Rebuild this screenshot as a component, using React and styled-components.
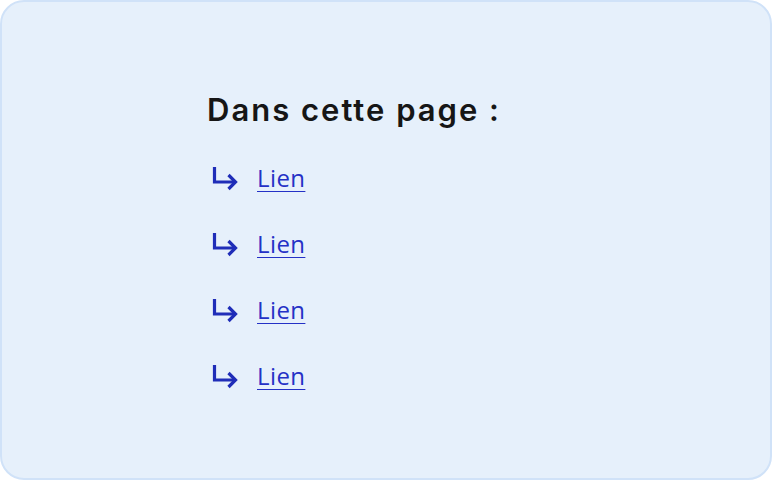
import React from "react";
import styled, { createGlobalStyle } from "styled-components";

const Global = createGlobalStyle`
  html, body { margin: 0; padding: 0; background: #ffffff; }
  * { box-sizing: border-box; }
`;

const Card = styled.nav`
  width: 772px;
  height: 480px;
  background: #e6f0fb;
  border: 2px solid #d0e2f8;
  border-radius: 24px;
  padding: 89px 0 0 205px;
  display: flex;
  flex-direction: column;
`;

const Title = styled.h2`
  margin: 0;
  font-family: "Inter", "Noto Sans", sans-serif;
  font-weight: 600;
  font-size: 31px;
  line-height: 38px;
  letter-spacing: 2px;
  color: #161616;
`;

const List = styled.ul`
  list-style: none;
  margin: 29px 0 0;
  padding: 0;
  display: flex;
  flex-direction: column;
  gap: 26px;
`;

const Item = styled.li`
  display: flex;
  align-items: center;
  gap: 19px;
  height: 40px;
  padding-left: 4px;
`;

const Link = styled.a`
  font-family: "Open Sans", "Noto Sans", sans-serif;
  font-size: 24px;
  line-height: 32px;
  letter-spacing: 0.4px;
  color: #2431c6;
  text-decoration: underline;
  text-decoration-thickness: 1px;
  text-underline-offset: 4px;
`;

const Arrow = () => (
  <svg width="27" height="26" viewBox="0 0 27 26" fill="none">
    <path d="M3.5 2 V17 H24" stroke="#1f2db8" strokeWidth="3.2" />
    <path d="M17.5 10 L24.5 17 L17.5 24" stroke="#1f2db8" strokeWidth="3.2" />
  </svg>
);

export default function App() {
  const links = ["Lien", "Lien", "Lien", "Lien"];
  return (
    <>
      <Global />
      <Card>
        <Title>Dans cette page :</Title>
        <List>
          {links.map((l, i) => (
            <Item key={i}>
              <Arrow />
              <Link href="#">{l}</Link>
            </Item>
          ))}
        </List>
      </Card>
    </>
  );
}
